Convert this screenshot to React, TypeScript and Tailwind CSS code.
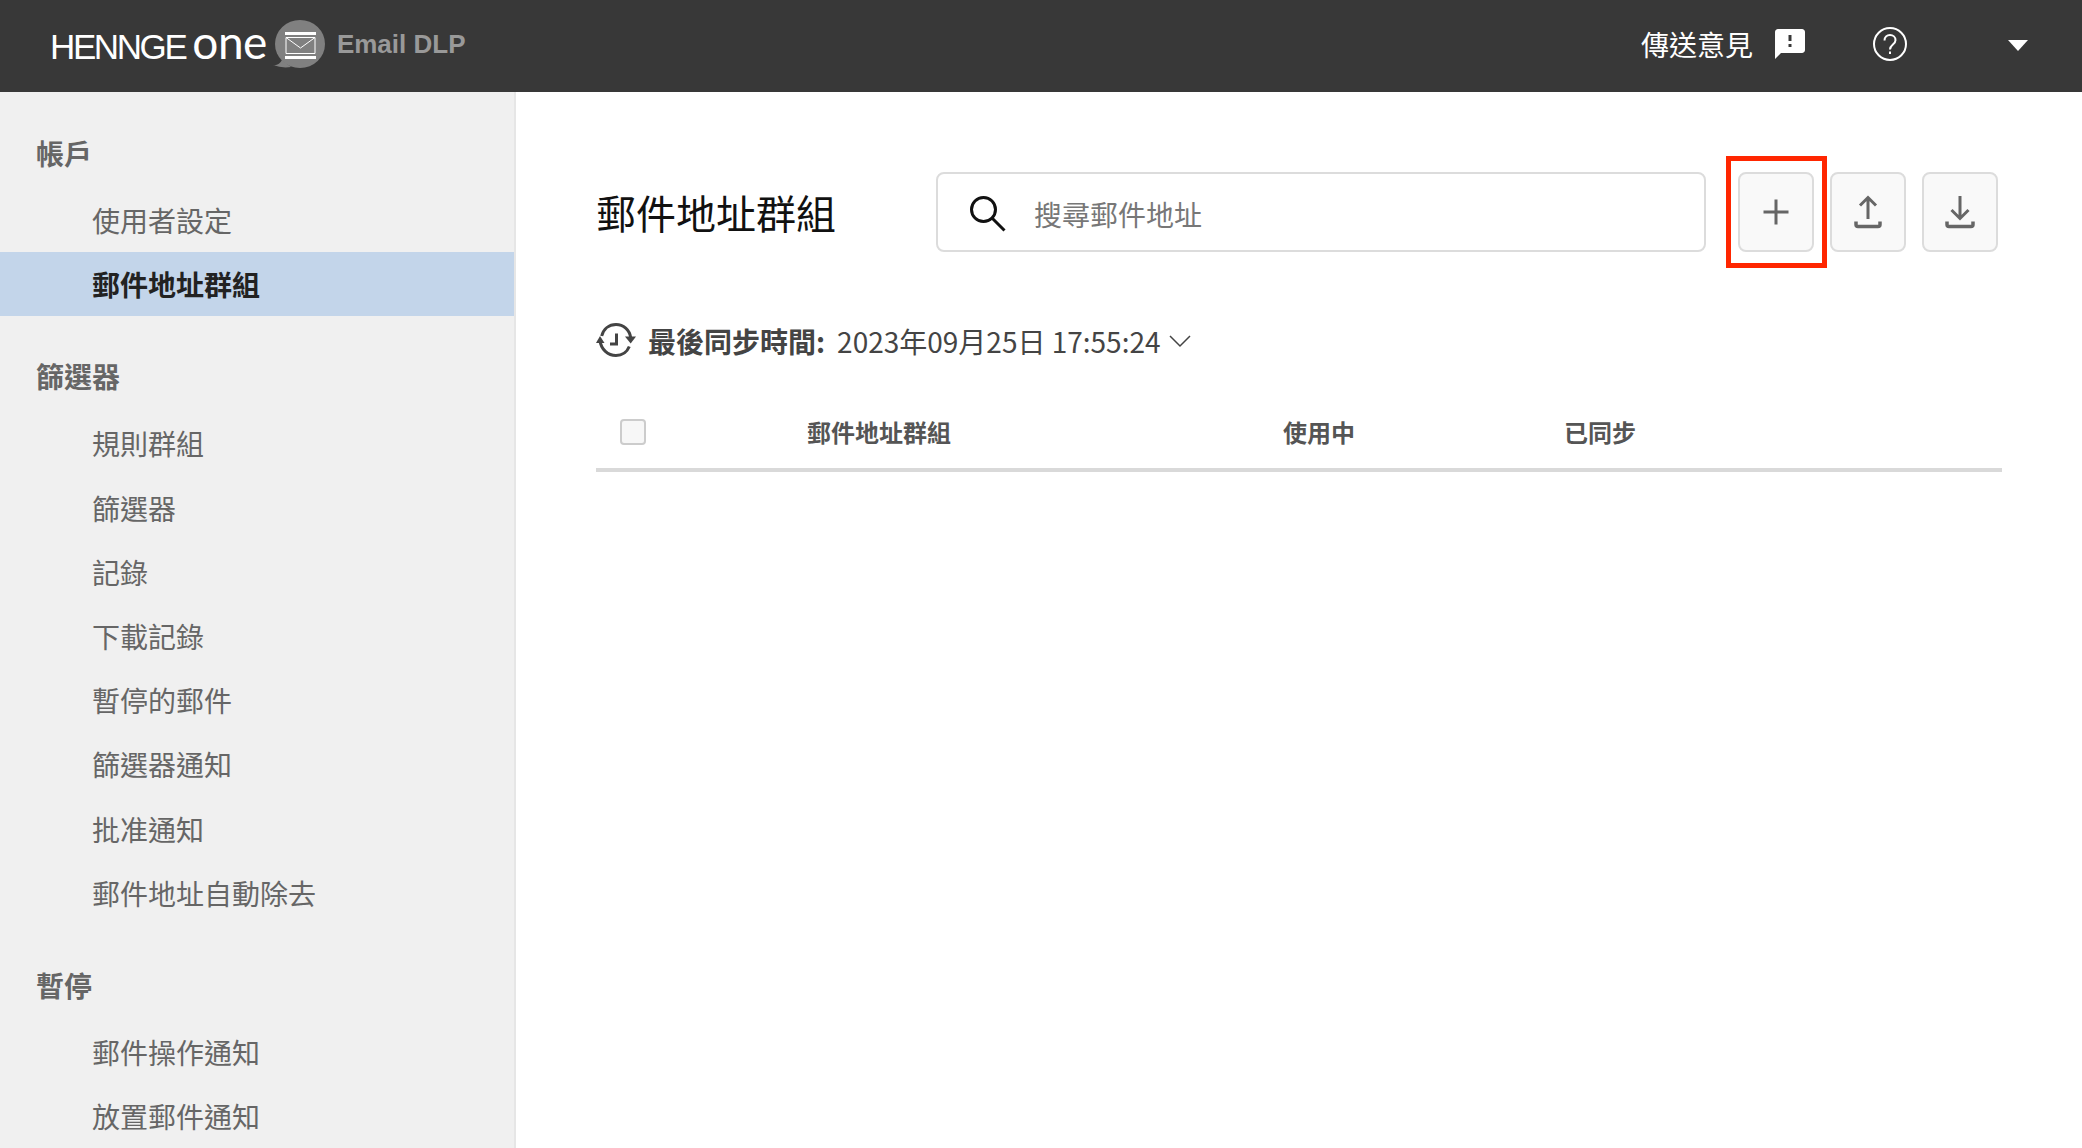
const cjk = "font-['Noto_Sans_CJK_TC','Noto_Sans',sans-serif]"

const accountItems = ["使用者設定", "郵件地址群組"]
const filterItems = ["規則群組", "篩選器", "記錄", "下載記錄", "暫停的郵件", "篩選器通知", "批准通知", "郵件地址自動除去"]
const holdItems = ["郵件操作通知", "放置郵件通知"]

function Logo() {
  return (
    <div className="flex items-center">
      <div className="mb-[4px] flex items-baseline">
        <span className="font-['Liberation_Sans',sans-serif] text-[35px] leading-none tracking-[-2.4px] text-white">HENNGE</span>
        <span className="ml-[7px] font-['Lato',sans-serif] text-[46px] leading-none tracking-[-0.5px] text-white">one</span>
      </div>
      <svg width="54" height="54" viewBox="0 0 54 54" className="ml-[4px]" aria-hidden="true">
        <ellipse cx="29" cy="27" rx="25" ry="24" fill="#808080" />
        <path d="M2 48 q6 1 9 -5 l9 7 q-9 1.500 -18 -2z" fill="#808080" />
        <rect x="14" y="15" width="31" height="3" fill="#fff" />
        <rect x="14" y="39" width="31" height="3" fill="#fff" />
        <path d="M15 20.500h29v16H15z M15 20.500l14.500 10.500 14.500-10.500" fill="none" stroke="#fff" strokeWidth="1" />
      </svg>
      <span className="ml-[12px] font-['Liberation_Sans',sans-serif] text-[26px] font-bold leading-none text-[#999999]">Email DLP</span>
    </div>
  )
}

function TopBar() {
  return (
    <header className="flex h-[92px] items-center bg-[#383838] pb-[4px] pl-[50px] pr-[54px]">
      <Logo />
      <div className={`ml-auto flex items-center text-[28px] text-white ${cjk}`}>
        <span>傳送意見</span>
        <svg width="36" height="36" viewBox="0 0 24 24" fill="#fff" className="ml-[19px]" aria-hidden="true">
          <path d="M20 2H4c-1.100 0-1.990.9-1.990 2L2 22l4-4h14c1.100 0 2-.9 2-2V4c0-1.100-.9-2-2-2zm-7 12h-2v-2h2v2zm0-4h-2V6h2v4z" />
        </svg>
        <svg width="36" height="36" viewBox="0 0 36 36" fill="none" stroke="#fff" strokeWidth="2" className="ml-[64px]" aria-hidden="true">
          <circle cx="18" cy="18" r="16" />
          <path d="M12.500 14.500c0-3.200 2.400-5.500 5.500-5.500s5.500 2.200 5.500 5.200c0 4.300-5.500 4.400-5.500 9.300" />
          <path d="M18 25.500v2.500" />
        </svg>
        <svg width="20" height="11" viewBox="0 0 20 11" fill="#fff" className="ml-[100px] mt-[3px]" aria-hidden="true">
          <path d="M0 0h20L10 11z" />
        </svg>
      </div>
    </header>
  )
}

function NavGroup({ title, items, active }: { title: string; items: string[]; active?: string }) {
  return (
    <div className="mb-[28px]">
      <div className="flex h-[64px] items-center pl-[36px] text-[28px] font-bold text-[#666666]">{title}</div>
      <ul className="mt-[3px]">
        {items.map((item) => (
          <li
            key={item}
            className={
              item === active
                ? "flex h-[64.2px] items-center bg-[#c3d5ea] pl-[92px] text-[28px] font-bold text-[#222222]"
                : "flex h-[64.2px] items-center pl-[92px] text-[28px] text-[#666666]"
            }
          >
            {item}
          </li>
        ))}
      </ul>
    </div>
  )
}

function Sidebar() {
  return (
    <aside className={`h-full w-[516px] shrink-0 overflow-hidden border-r-2 border-[#e6e6e6] bg-[#f0f0f0] pt-[29px] ${cjk}`}>
      <NavGroup title="帳戶" items={accountItems} active="郵件地址群組" />
      <NavGroup title="篩選器" items={filterItems} />
      <NavGroup title="暫停" items={holdItems} />
    </aside>
  )
}

function ActionButton({ children }: { children: React.ReactNode }) {
  return (
    <button className="flex h-[80px] w-[76px] items-center justify-center rounded-[8px] border-2 border-[#dcdcdc] bg-[#f9f9f9]">
      {children}
    </button>
  )
}

function Toolbar() {
  return (
    <div className="flex items-center">
      <h1 className="w-[340px] text-[40px] leading-none text-[#111111]">郵件地址群組</h1>
      <div className="flex h-[80px] w-[770px] items-center rounded-[8px] border-2 border-[#dcdcdc] bg-white pl-[29px]">
        <svg width="40" height="40" viewBox="0 0 40 40" fill="none" stroke="#111" strokeWidth="3" className="mt-[2px]" aria-hidden="true">
          <circle cx="16.500" cy="16.500" r="12" />
          <path d="M25 25l12.500 12.500" />
        </svg>
        <span className="ml-[27px] pt-[4px] text-[28px] text-[#777777]">搜尋郵件地址</span>
      </div>
      <div className="relative ml-[32px]">
        <ActionButton>
          <svg width="28" height="28" viewBox="0 0 28 28" fill="none" stroke="#666" strokeWidth="3" aria-hidden="true">
            <path d="M14 1.500v25M1.500 14h25" />
          </svg>
        </ActionButton>
        <div className="absolute -left-[12px] -top-[16px] h-[112px] w-[101px] border-[5px] border-[#ff2600]" />
      </div>
      <div className="ml-[16px]">
        <ActionButton>
          <svg width="28" height="34" viewBox="0 0 28 34" fill="none" stroke="#666" strokeWidth="3" aria-hidden="true">
            <path d="M14 24V2.500M6 10.500l8-8 8 8" />
            <path d="M2 26.500v3a2 2 0 0 0 2 2h20a2 2 0 0 0 2-2v-3" strokeWidth="3.500" />
          </svg>
        </ActionButton>
      </div>
      <div className="ml-[16px]">
        <ActionButton>
          <svg width="30" height="34" viewBox="0 0 30 34" fill="none" stroke="#666" strokeWidth="3" aria-hidden="true">
            <path d="M15 1v22M6.500 15l8.500 8.500 8.500-8.500" />
            <path d="M2 26.500v3a2 2 0 0 0 2 2h22a2 2 0 0 0 2-2v-3" strokeWidth="3.500" />
          </svg>
        </ActionButton>
      </div>
    </div>
  )
}

function SyncRow() {
  return (
    <div className="mt-[69px] flex h-[40px] items-center text-[28px] text-[#444444]">
      <svg width="40" height="34" viewBox="0 0 40 34" fill="none" stroke="#444" strokeWidth="3" className="mb-[2px]" aria-hidden="true">
        <path d="M5.700 13C7.500 6 13 1.500 20 1.500c7.500 0 13.500 5.500 14.700 13" />
        <path d="M33.300 23.500C31 29 26 32.500 20 32.500c-8 0-15-6-16-15" />
        <path d="M0 20l4-7 4.500 7z" fill="#444" stroke="none" />
        <path d="M29 13.500h11l-5.300 7z" fill="#444" stroke="none" />
        <path d="M20.500 10.500v10.500h-6.500" />
      </svg>
      <span className="ml-[12px] font-bold">最後同步時間:</span>
      <span className="ml-[12px]">2023年09月25日 17:55:24</span>
      <svg width="22" height="14" viewBox="0 0 22 14" fill="none" stroke="#444" strokeWidth="1.500" className="ml-[8px]" aria-hidden="true">
        <path d="M1 2l10 10L21 2" />
      </svg>
    </div>
  )
}

function TableHead() {
  return (
    <div className="mt-[40px] flex h-[71px] items-center border-b-4 border-[#d9d9d9] pb-[5px] text-[24px] font-bold text-[#555555]">
      <div className="w-[211px] pl-[24px]">
        <div className="h-[26px] w-[26px] rounded-[4px] border-2 border-[#cccccc] bg-[#f7f7f7]" />
      </div>
      <div className="w-[476px]">郵件地址群組</div>
      <div className="w-[281px]">使用中</div>
      <div>已同步</div>
    </div>
  )
}

export default function App() {
  return (
    <div className="flex h-[1148px] flex-col overflow-hidden bg-white">
      <TopBar />
      <div className="flex min-h-0 flex-1">
        <Sidebar />
        <main className={`min-w-0 flex-1 pl-[80px] pr-[80px] pt-[80px] ${cjk}`}>
          <Toolbar />
          <SyncRow />
          <TableHead />
        </main>
      </div>
    </div>
  )
}
